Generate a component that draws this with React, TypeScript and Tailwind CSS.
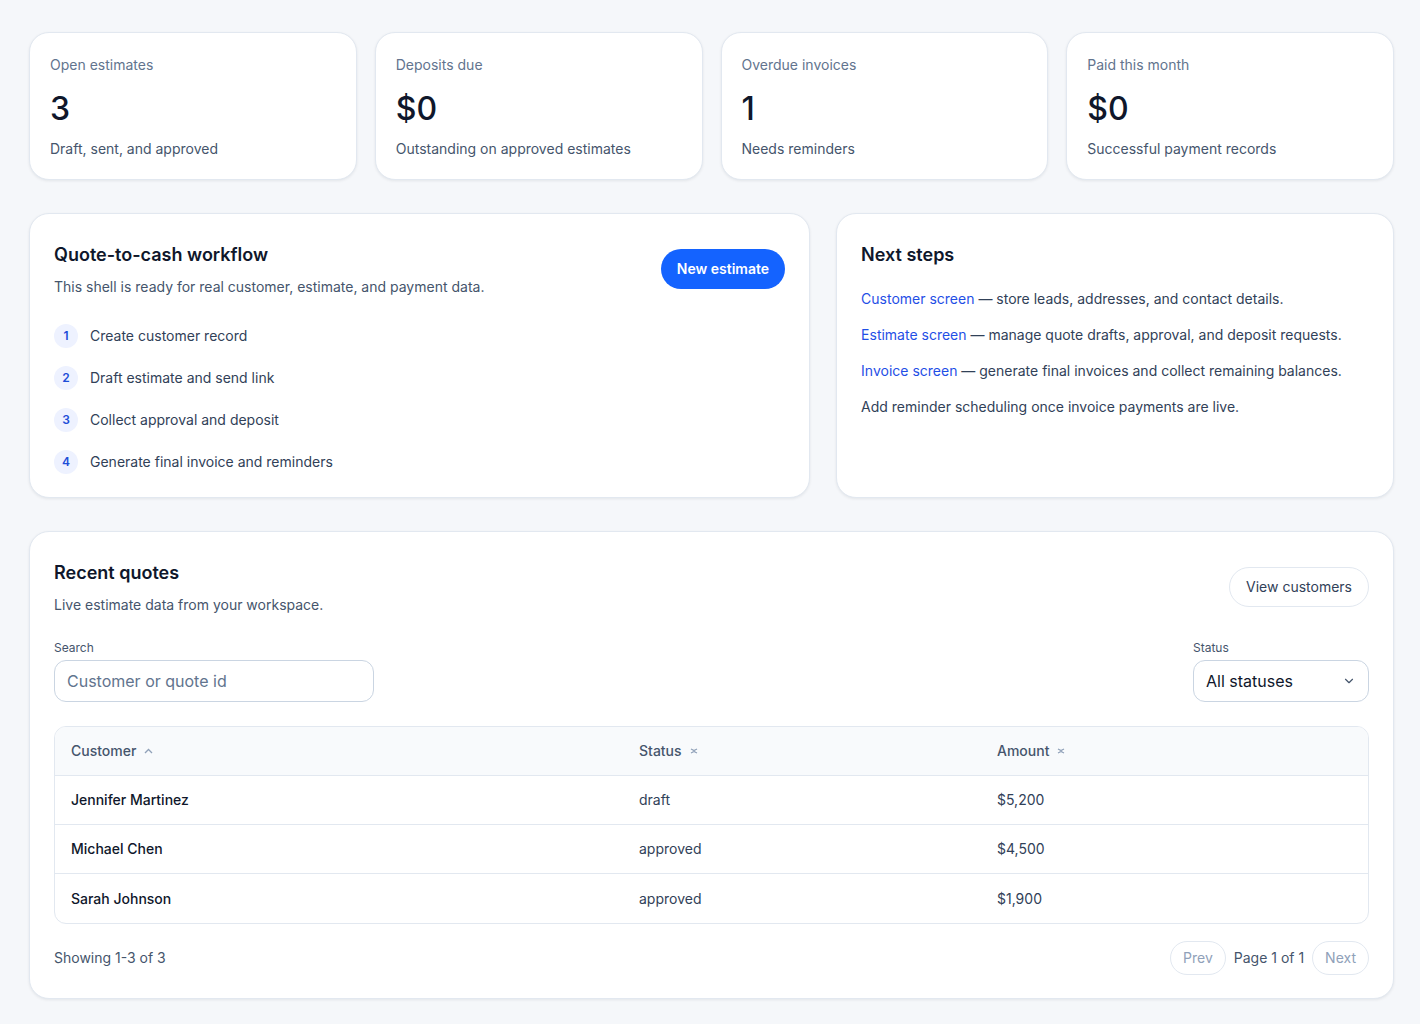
const stats = [
  { label: "Open estimates", value: "3", note: "Draft, sent, and approved" },
  { label: "Deposits due", value: "$0", note: "Outstanding on approved estimates" },
  { label: "Overdue invoices", value: "1", note: "Needs reminders" },
  { label: "Paid this month", value: "$0", note: "Successful payment records" },
];

const steps = [
  "Create customer record",
  "Draft estimate and send link",
  "Collect approval and deposit",
  "Generate final invoice and reminders",
];

const nextSteps = [
  { link: "Customer screen", text: "store leads, addresses, and contact details." },
  { link: "Estimate screen", text: "manage quote drafts, approval, and deposit requests." },
  { link: "Invoice screen", text: "generate final invoices and collect remaining balances." },
];

const quotes = [
  { name: "Jennifer Martinez", status: "draft", amount: "$5,200" },
  { name: "Michael Chen", status: "approved", amount: "$4,500" },
  { name: "Sarah Johnson", status: "approved", amount: "$1,900" },
];

function SortBoth() {
  return (
    <svg width="8" height="6" viewBox="0 0 8 6" className="text-slate-400">
      <path d="M1 1l3 1.5L7 1M1 5l3-1.5L7 5" fill="none" stroke="currentColor" strokeWidth="1.3" />
    </svg>
  );
}

function SortUp() {
  return (
    <svg width="9" height="6" viewBox="0 0 9 6" className="text-slate-400">
      <path d="M1 5l3.5-3.5L8 5" fill="none" stroke="currentColor" strokeWidth="1.3" />
    </svg>
  );
}

const card = "bg-white rounded-[20px] border border-slate-200 shadow-[0_1px_3px_rgba(15,23,42,0.08)]";

export default function App() {
  return (
    <div className="min-h-screen bg-[#f5f7fa] pl-[29px] pr-[26px] pt-[32px] pb-[27px] font-['Inter',sans-serif] text-slate-700">
      <div className="grid grid-cols-4 gap-[18px]">
        {stats.map((s) => (
          <div key={s.label} className={`${card} h-[148px] px-5 pt-[22px]`}>
            <div className="text-sm leading-5 text-slate-500">{s.label}</div>
            <div className="mt-[15px] text-[32px] leading-[38px] font-medium text-slate-900">{s.value}</div>
            <div className="mt-[11px] text-sm leading-5 text-slate-600">{s.note}</div>
          </div>
        ))}
      </div>

      <div className="mt-[33px] grid grid-cols-[7fr_5fr] gap-[26px]">
        <div className={`${card} h-[285px] px-6 pt-[27px]`}>
          <div className="flex items-center justify-between">
            <div>
              <h2 className="text-lg leading-7 font-semibold text-slate-900">Quote-to-cash workflow</h2>
              <p className="mt-2 text-sm leading-5 text-slate-600">
                This shell is ready for real customer, estimate, and payment data.
              </p>
            </div>
            <button className="h-10 rounded-full bg-[#1463ff] px-4 text-sm font-semibold text-white">
              New estimate
            </button>
          </div>
          <ul className="mt-[27px] flex flex-col gap-[18px]">
            {steps.map((t, i) => (
              <li key={t} className="flex items-center gap-3">
                <span className="flex h-6 w-6 items-center justify-center rounded-full bg-[#eef2ff] text-xs font-semibold text-[#1d4ed8]">
                  {i + 1}
                </span>
                <span className="text-sm leading-5 text-slate-700">{t}</span>
              </li>
            ))}
          </ul>
        </div>

        <div className={`${card} h-[285px] px-6 pt-[27px]`}>
          <h2 className="text-lg leading-7 font-semibold text-slate-900">Next steps</h2>
          <div className="mt-5 flex flex-col gap-4 text-sm leading-5 text-slate-700">
            {nextSteps.map((n) => (
              <p key={n.link}>
                <a className="text-[#1f4fe6]">{n.link}</a> — {n.text}
              </p>
            ))}
            <p>Add reminder scheduling once invoice payments are live.</p>
          </div>
        </div>
      </div>

      <div className={`${card} mt-[33px] px-6 pt-[27px] pb-[23px]`}>
        <div className="flex items-center justify-between">
          <div>
            <h2 className="text-lg leading-7 font-semibold text-slate-900">Recent quotes</h2>
            <p className="mt-2 text-sm leading-5 text-slate-600">Live estimate data from your workspace.</p>
          </div>
          <button className="h-10 rounded-full border border-slate-200 px-4 text-sm text-slate-700">
            View customers
          </button>
        </div>

        <div className="mt-[25px] flex items-end justify-between">
          <label className="block">
            <span className="block text-xs leading-4 text-slate-600">Search</span>
            <div className="mt-1 flex h-[42px] w-[320px] items-center rounded-xl border border-slate-300 px-3 text-base text-slate-500">
              Customer or quote id
            </div>
          </label>
          <label className="block">
            <span className="block text-xs leading-4 text-slate-600">Status</span>
            <div className="mt-1 flex h-[42px] w-[176px] items-center justify-between rounded-xl border border-slate-300 pl-3 pr-3 text-base text-slate-900">
              All statuses
              <svg width="14" height="14" viewBox="0 0 24 24" className="text-slate-600">
                <path d="M6 9l6 6 6-6" fill="none" stroke="currentColor" strokeWidth="2" strokeLinecap="round" strokeLinejoin="round" />
              </svg>
            </div>
          </label>
        </div>

        <div className="mt-6 overflow-hidden rounded-xl border border-slate-200">
          <div className="grid h-[49px] grid-cols-[568px_358px_1fr] items-center border-b border-slate-200 bg-[#f8fafc] px-4 text-sm font-medium text-slate-600">
            <div className="flex items-center gap-2">Customer <SortUp /></div>
            <div className="flex items-center gap-2">Status <SortBoth /></div>
            <div className="flex items-center gap-2">Amount <SortBoth /></div>
          </div>
          {quotes.map((q, i) => (
            <div
              key={q.name}
              className={`grid h-[49px] grid-cols-[568px_358px_1fr] items-center px-4 text-sm ${i < quotes.length - 1 ? "border-b border-slate-200" : ""}`}
            >
              <div className="font-medium text-slate-900">{q.name}</div>
              <div className="text-slate-700">{q.status}</div>
              <div className="text-slate-700">{q.amount}</div>
            </div>
          ))}
        </div>

        <div className="mt-[17px] flex items-center justify-between">
          <span className="text-sm text-slate-600">Showing 1-3 of 3</span>
          <div className="flex items-center gap-2 text-sm">
            <button className="h-[34px] rounded-full border border-slate-200 px-3 text-slate-400">Prev</button>
            <span className="text-slate-600">Page 1 of 1</span>
            <button className="h-[34px] rounded-full border border-slate-200 px-3 text-slate-400">Next</button>
          </div>
        </div>
      </div>
    </div>
  );
}
